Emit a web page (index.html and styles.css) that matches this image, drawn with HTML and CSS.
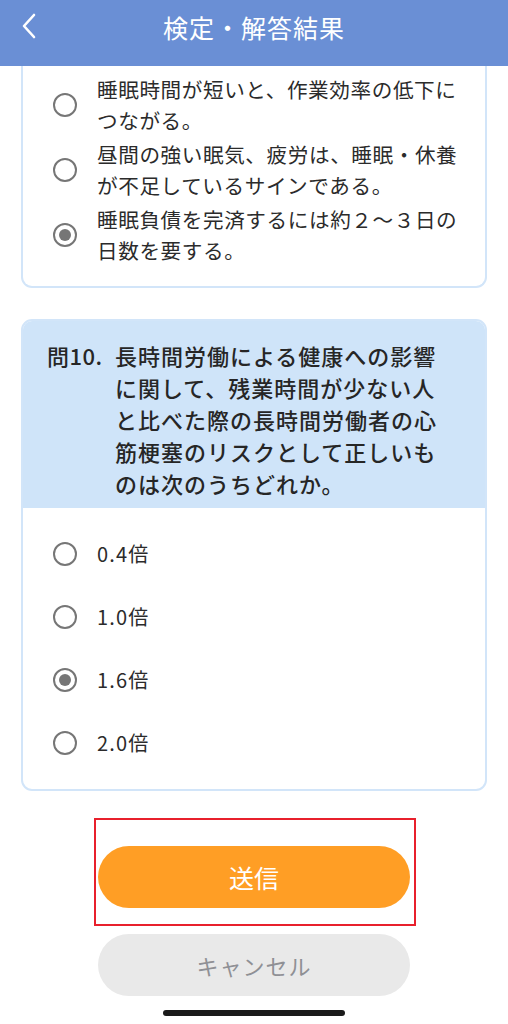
FILE: index.html
```html
<!DOCTYPE html>
<html lang="ja">
<head>
<meta charset="utf-8">
<title>検定・解答結果</title>
<link rel="stylesheet" href="styles.css">
</head>
<body>
<header class="topbar">
  <svg class="back" width="16" height="26" viewBox="0 0 16 26"><path d="M13 2 L3 13 L13 24" fill="none" stroke="#fff" stroke-width="2.6" stroke-linecap="round" stroke-linejoin="round"/></svg>
  <h1 class="title">検定・解答結果</h1>
</header>
<main class="content">
  <section class="card card-cut">
    <ul class="options options-tight">
      <li class="option"><span class="radio"></span><span class="label">睡眠時間が短いと、作業効率の低下につながる。</span></li>
      <li class="option"><span class="radio"></span><span class="label">昼間の強い眠気、疲労は、睡眠・休養が不足しているサインである。</span></li>
      <li class="option"><span class="radio checked"></span><span class="label">睡眠負債を完済するには約２〜３日の日数を要する。</span></li>
    </ul>
  </section>
  <section class="card">
    <div class="question">
      <span class="qnum">問10.</span>
      <span class="qtext">長時間労働による健康への影響に関して、残業時間が少ない人と比べた際の長時間労働者の心筋梗塞のリスクとして正しいものは次のうちどれか。</span>
    </div>
    <ul class="options options-wide">
      <li class="option"><span class="radio"></span><span class="label">0.4倍</span></li>
      <li class="option"><span class="radio"></span><span class="label">1.0倍</span></li>
      <li class="option"><span class="radio checked"></span><span class="label">1.6倍</span></li>
      <li class="option"><span class="radio"></span><span class="label">2.0倍</span></li>
    </ul>
  </section>
</main>
<div class="actions">
  <div class="highlight"><button class="btn btn-primary">送信</button></div>
  <button class="btn btn-cancel">キャンセル</button>
</div>
<div class="home-bar"><span class="home-indicator"></span></div>
</body>
</html>
```
FILE: styles.css
```css
* { box-sizing: border-box; }
html, body { margin: 0; padding: 0; }
body {
  width: 508px;
  height: 1024px;
  overflow: hidden;
  background: #fff;
  font-family: "Noto Sans CJK JP", "Noto Sans", sans-serif;
  color: #2b2b2b;
}
.topbar {
  height: 66px;
  background: #6a8fd5;
  display: flex;
  align-items: center;
  justify-content: center;
  position: relative;
}
.back {
  position: absolute;
  left: 21px;
  top: 13px;
}
.title {
  margin: 0 0 12px 0;
  font-size: 25px;
  font-weight: 400;
  letter-spacing: 1px;
  color: #fff;
}
.content {
  padding: 0 21px;
  display: flex;
  flex-direction: column;
  gap: 31px;
}
.card {
  border: 2px solid #d2e5f9;
  border-radius: 11px;
  background: #fff;
  overflow: hidden;
}
.card-cut {
  border-top: none;
  border-top-left-radius: 0;
  border-top-right-radius: 0;
}
.options {
  list-style: none;
  margin: 0;
  padding: 0;
}
.options-tight {
  padding: 8px 20px 20px 30px;
  display: flex;
  flex-direction: column;
  gap: 3px;
}
.options-tight .label {
  font-size: 20.6px;
  line-height: 31px;
  letter-spacing: 0.6px;
}
.options-wide {
  padding: 14px 20px 15px 30px;
}
.options-wide .option {
  height: 63px;
}
.options-wide .label {
  font-size: 20px;
  letter-spacing: 1.2px;
}
.option {
  display: flex;
  align-items: center;
  gap: 20px;
}
.radio {
  flex: none;
  width: 24px;
  height: 24px;
  border: 2.6px solid #767676;
  border-radius: 50%;
  display: flex;
  align-items: center;
  justify-content: center;
}
.radio.checked::after {
  content: "";
  width: 12px;
  height: 12px;
  border-radius: 50%;
  background: #767676;
}
.question {
  background: #cfe4f9;
  display: flex;
  padding: 18px 44px 9px 24px;
  font-size: 22px;
  line-height: 32px;
  font-weight: 500;
  color: #262626;
}
.qnum {
  flex: none;
  width: 68px;
  letter-spacing: 0.5px;
}
.qtext {
  letter-spacing: 1px;
}
.actions {
  margin-top: 27px;
  display: flex;
  flex-direction: column;
  align-items: center;
  gap: 8px;
}
.highlight {
  width: 322px;
  height: 108px;
  border: 2px solid #e8202c;
  padding: 26px 4px 0 2px;
  margin-left: 2px;
}
.btn {
  border: none;
  width: 312px;
  height: 62px;
  border-radius: 31px;
  font-family: "Noto Sans CJK JP", "Noto Sans", sans-serif;
  display: flex;
  align-items: center;
  justify-content: center;
  padding: 0;
}
.btn-primary {
  background: #ff9e25;
  color: #fff;
  font-size: 25px;
}
.btn-cancel {
  background: #e9e9e9;
  color: #8f9095;
  font-size: 22px;
  letter-spacing: 1px;
}
.home-bar {
  display: flex;
  justify-content: center;
  padding-top: 14px;
}
.home-indicator {
  width: 182px;
  height: 6px;
  border-radius: 3px;
  background: #1a1a1a;
}
```
